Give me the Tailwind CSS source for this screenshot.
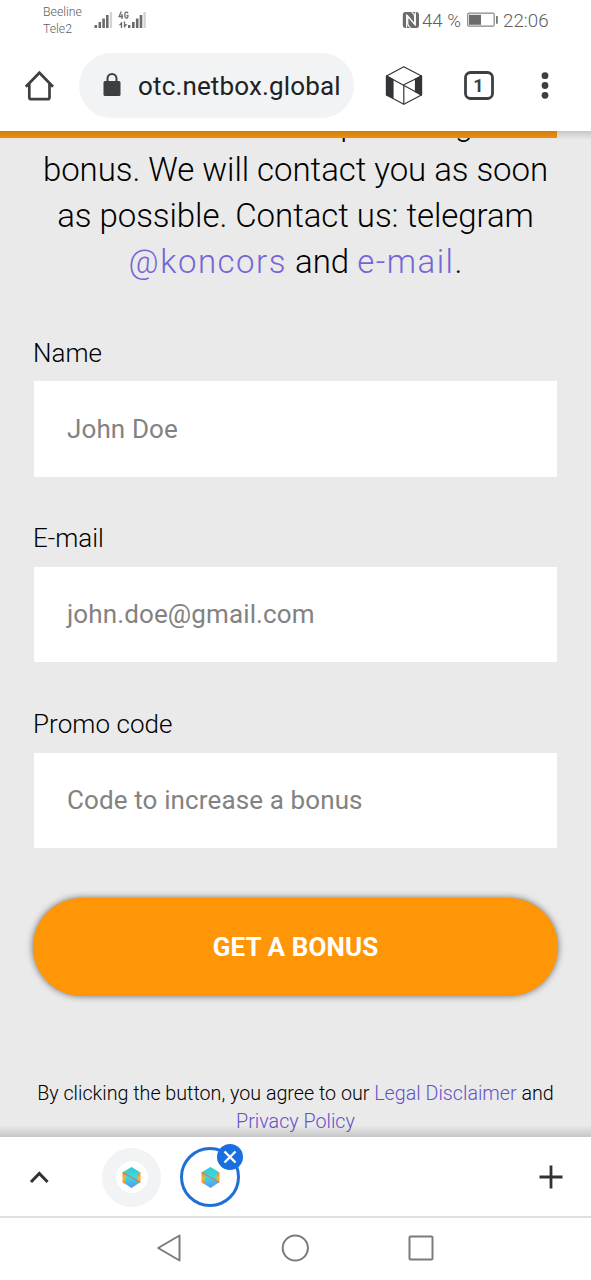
<!DOCTYPE html>
<html lang="en">
<head>
<meta charset="utf-8">
<meta name="viewport" content="width=device-width, initial-scale=1">
<title>otc.netbox.global</title>
<script src="https://cdn.jsdelivr.net/npm/@tailwindcss/browser@4"></script>
</head>
<body class="bg-white font-['Roboto',sans-serif]">
<div class="flex h-[1280px] w-[591px] flex-col overflow-hidden bg-white">

  <!-- Status bar -->
  <div class="flex h-10 shrink-0 items-start text-[#606060]">
    <div class="ml-[43px] w-[51px] pt-[4px] text-[12.3px] font-light leading-[17px]">
      <div>Beeline</div>
      <div>Tele2</div>
    </div>
    <svg class="mt-2 h-6 w-[54px]" viewBox="94 8 54 24" fill="#6b6b6b">
      <path d="M94.500 25h2.600v3h-2.600zM98.500 22h2.600v6h-2.600zM102.300 18.500h2.600v9.500h-2.600zM106 15h2.600v13h-2.600z"/>
      <path d="M109.800 12h2.300v16h-2.300zM143.500 12h2.300v16h-2.300z" fill="#d2d2d2"/>
      <path d="M128 25h2.400v3h-2.400zM132 22h2.600v6h-2.600zM135.900 18.500h2.600v9.500h-2.600zM139.700 15h2.600v13h-2.600z"/>
      <path d="M121.300 11.500l-2.200 5h4M122 14v5M128 13.200q-.5-1-1.500-1-1.600 0-1.600 1.500v2.800q0 1.500 1.600 1.500 1.400 0 1.400-1.300v-1.200h-1.300" fill="none" stroke="#6b6b6b" stroke-width="1.300"/>
      <path d="M121.500 22v6M124.500 21.500v6" stroke="#6b6b6b" stroke-width="1.300"/>
      <path d="M118.600 25.200l3.200-3.200v3.200zM127.600 24.300l-3.200 3.200v-3.200z"/>
    </svg>
    <div class="ml-auto mr-[42px] flex h-10 items-center text-[19px] leading-none">
      <svg class="h-[18px] w-[18px]" viewBox="0 0 18 18">
        <path d="M3.500 1H14q3 0 3 3v10q0 3-2.500 3H3.500Q.8 17 .8 14V4Q.8 1 3.500 1z" fill="#6b6b6b"/>
        <path d="M4.600 16.800V4.200l8 9V5.500q0-3-3-4M13.400 1.200v12.600L5.800 5v7.500q0 3 3 4" fill="none" stroke="#fff" stroke-width="1.100"/>
      </svg>
      <span class="ml-[2px] mt-[2px] w-[45px] whitespace-nowrap text-[18.700px] font-light">44 %</span>
      <svg class="h-4 w-8" viewBox="0 0 32 16">
        <rect x="0.700" y="1.200" width="26.500" height="13" rx="1.500" fill="none" stroke="#858585" stroke-width="1.200"/>
        <path d="M2 2.800h12v10H2z" fill="#6b6b6b"/>
        <path d="M29 4h1.800v7.800H29z" fill="#777"/>
      </svg>
      <span class="ml-[4px] mt-[2px] w-[46px] whitespace-nowrap text-[18.800px] font-light">22:06</span>
    </div>
  </div>

  <!-- Browser toolbar -->
  <header class="flex h-[91px] shrink-0 items-center">
    <svg class="ml-[23px] h-8 w-8" viewBox="23 70 32 32" fill="none" stroke="#3c4043" stroke-width="2.700">
      <path d="M25.800 86.700L39.400 72.700L53 86.700" stroke-linejoin="miter"/>
      <path d="M29.300 84v13.200q0 2 2 2h16.200q2 0 2-2V84"/>
    </svg>
    <div class="ml-6 flex h-[65px] w-[275px] items-center rounded-full bg-[#f1f3f4]">
      <svg class="ml-6 h-6 w-[18px] -mt-0.5" viewBox="0 0 18 24">
        <path d="M2 8h14q1.500 0 1.500 1.500v12Q17.500 23 16 23H2Q.5 23 .5 21.500v-12Q.5 8 2 8z" fill="#3c4043"/>
        <path d="M4.500 9V5.500a4.500 4.500 0 0 1 9 0V9" fill="none" stroke="#3c4043" stroke-width="2"/>
      </svg>
      <span class="ml-[17px] mt-[2px] whitespace-nowrap text-[26px] tracking-[0.150px] text-[#202124]">otc.netbox.global</span>
    </div>
    <svg class="ml-[31px] h-10 w-[38px]" viewBox="385 66 38 40" fill="none" stroke="#333638" stroke-width="1.200" stroke-linejoin="round">
      <path d="M403.800 66.700L421.500 76v19L403.800 104.300L386.500 95V76z"/>
      <path d="M386.500 76L421.500 95M403.800 84.800V104.300M403.800 84.800L421.500 76M416 78.500V91"/>
      <path d="M386.500 76l6.500 3.500v18.500l-6.500-3zM415.500 79l6-3v19l-6-3.300z" fill="#333638"/>
    </svg>
    <svg class="ml-[41px] h-[30px] w-[30px]" viewBox="0 0 30 30">
      <rect x="1.500" y="1.500" width="27" height="26" rx="5" fill="none" stroke="#3c4043" stroke-width="2.800"/>
      <text x="14.500" y="20.800" text-anchor="middle" font-family="Roboto" font-size="18" font-weight="700" fill="#3c4043">1</text>
    </svg>
    <svg class="ml-[47px] h-8 w-2" viewBox="0 0.500 8 32" fill="#3c4043">
      <circle cx="4" cy="6.200" r="3.400"/><circle cx="4" cy="16" r="3.400"/><circle cx="4" cy="25.800" r="3.400"/>
    </svg>
  </header>

  <!-- Page -->
  <main class="relative flex h-[1006px] shrink-0 flex-col overflow-hidden bg-[#eaeaea]">
    <div class="absolute left-0 top-0 z-10 h-[7px] w-[557px] bg-[#f5940f]"></div>
    <div class="pointer-events-none absolute inset-x-0 top-0 z-20 h-[9px] bg-linear-to-b from-black/15 to-transparent"></div>
    <div class="pointer-events-none absolute inset-x-0 bottom-0 z-20 h-[12px] bg-linear-to-t from-black/15 to-transparent"></div>

    <div class="-mt-[30px] flex flex-col text-center text-[33px] font-light leading-[46px] text-black">
      <p class="h-[46px] whitespace-nowrap pl-[85px]">Thanks for providing a</p>
      <p class="h-[46px] whitespace-nowrap tracking-[-0.060px]">bonus. We will contact you as soon</p>
      <p class="h-[46px] whitespace-nowrap tracking-[-0.060px]">as possible. Contact us: telegram</p>
      <p class="h-[46px] whitespace-nowrap"><a class="tracking-[1.5px] text-[#7566d6]">@koncors</a> and <a class="tracking-[1.5px] text-[#7566d6]">e-mail</a>.</p>
    </div>

    <form class="mx-[34px] mt-[50px] flex flex-col">
      <label class="-ml-px h-[46px] text-[26px] font-light leading-[36px] text-black">Name</label>
      <div class="flex h-[96px] items-center bg-white pl-[33px] text-[26px] tracking-[0.120px] text-[#828282]"><span>John Doe</span></div>
      <label class="-ml-px mt-[44px] h-[46px] text-[26px] font-light leading-[35px] text-black">E-mail</label>
      <div class="flex h-[95px] items-center bg-white pl-[33px] text-[26px] tracking-[0.120px] text-[#828282]"><span>john.doe@gmail.com</span></div>
      <label class="-ml-px mt-[45px] h-[46px] text-[26px] font-light leading-[34px] tracking-[0.060px] text-black">Promo code</label>
      <div class="flex h-[95px] items-center bg-white pl-[33px] text-[26px] tracking-[0.120px] text-[#828282]"><span>Code to increase a bonus</span></div>
      <button type="button" class="-mx-[1px] mt-[50px] h-[98px] rounded-full bg-[#ff9608] text-[26px] font-bold tracking-[0.100px] text-white shadow-[0_0_7px_rgba(0,0,0,0.55)]">GET A BONUS</button>
    </form>

    <div class="mt-[84px] text-center text-[19.700px] font-light leading-[28px] text-black">
      <p class="whitespace-nowrap">By clicking the button, you agree to our <a class="text-[#6352c8]">Legal Disclaimer</a> and</p>
      <p><a class="text-[#6352c8]">Privacy Policy</a></p>
    </div>
  </main>

  <!-- Tab strip -->
  <div class="flex h-[81px] shrink-0 items-center border-b-2 border-[#e0e0e0] pt-px">
    <svg class="ml-[29px] h-5 w-5" viewBox="0 0 20 20" fill="none" stroke="#303336" stroke-width="3"><path d="M2 15l8.300-8.500 8.300 8.500"/></svg>
    <div class="ml-[53px] flex h-[59px] w-[59px] items-center justify-center rounded-full bg-[#f1f3f4]">
      <div class="flex h-8 w-8 items-center justify-center rounded-full bg-white">
        <svg class="h-[21px] w-[19px]" viewBox="0 0 19 21">
          <defs>
            <linearGradient id="cube" x1="0" y1="0" x2="0" y2="1"><stop offset="0" stop-color="#35c8cf"/><stop offset=".5" stop-color="#3bd8e8"/><stop offset="1" stop-color="#5b90f0"/></linearGradient>
            <linearGradient id="side" x1="0" y1="0" x2="0" y2="1"><stop offset="0" stop-color="#e08a3c"/><stop offset=".5" stop-color="#f8b81c"/><stop offset="1" stop-color="#e88a50"/></linearGradient>
          </defs>
          <path d="M9.500 0L17.500 4.800v11L9.500 21L1.500 15.800v-11z" fill="url(#cube)"/>
          <path d="M.5 5l3.200 1.700v10.500l-3.200-1.700zM18.500 5l-3 1.500v8l3 1.200z" fill="url(#side)"/>
          <path d="M.8 5.300L18 15.500" stroke="#c9824e" stroke-width="1.200"/>
        </svg>
      </div>
    </div>
    <div class="relative ml-[19px] flex h-[60px] w-[60px] items-center justify-center rounded-full border-[3px] border-[#1f6fd8]">
      <svg class="h-[21px] w-[19px]" viewBox="0 0 19 21">
        <path d="M9.500 0L17.500 4.800v11L9.500 21L1.500 15.800v-11z" fill="url(#cube)"/>
        <path d="M.5 5l3.200 1.700v10.500l-3.200-1.700zM18.500 5l-3 1.500v8l3 1.200z" fill="url(#side)"/>
        <path d="M.8 5.300L18 15.500" stroke="#c9824e" stroke-width="1.200"/>
      </svg>
      <div class="absolute -right-[6px] -top-[6px] flex h-[26px] w-[26px] items-center justify-center rounded-full bg-[#1a6fdf]">
        <svg class="h-[14px] w-[14px]" viewBox="0 0 14 14" stroke="#fff" stroke-width="2.400"><path d="M1.500 1.500l11 11M12.500 1.500l-11 11"/></svg>
      </div>
    </div>
    <svg class="ml-auto mr-7 h-6 w-6" viewBox="0 0 24 24" stroke="#303336" stroke-width="2.800"><path d="M.5 12h23M12 .5v23"/></svg>
  </div>

  <!-- System navigation -->
  <nav class="flex h-[60px] items-center pl-[156px]">
    <svg class="h-8 w-[26px]" viewBox="0 0 26 32" fill="none" stroke="#7b7b7b" stroke-width="2" stroke-linejoin="round"><path d="M23.500 3.500v25L2.200 16z"/></svg>
    <svg class="ml-[99px] h-7 w-7" viewBox="0 0 28 28" fill="none" stroke="#7b7b7b" stroke-width="2"><circle cx="14.300" cy="14" r="12.600"/></svg>
    <svg class="ml-[99px] h-[26px] w-[26px]" viewBox="0 0 26 26" fill="none" stroke="#7b7b7b" stroke-width="2"><rect x="1.500" y="1.500" width="23" height="23" rx="1"/></svg>
  </nav>
</div>
</body>
</html>
